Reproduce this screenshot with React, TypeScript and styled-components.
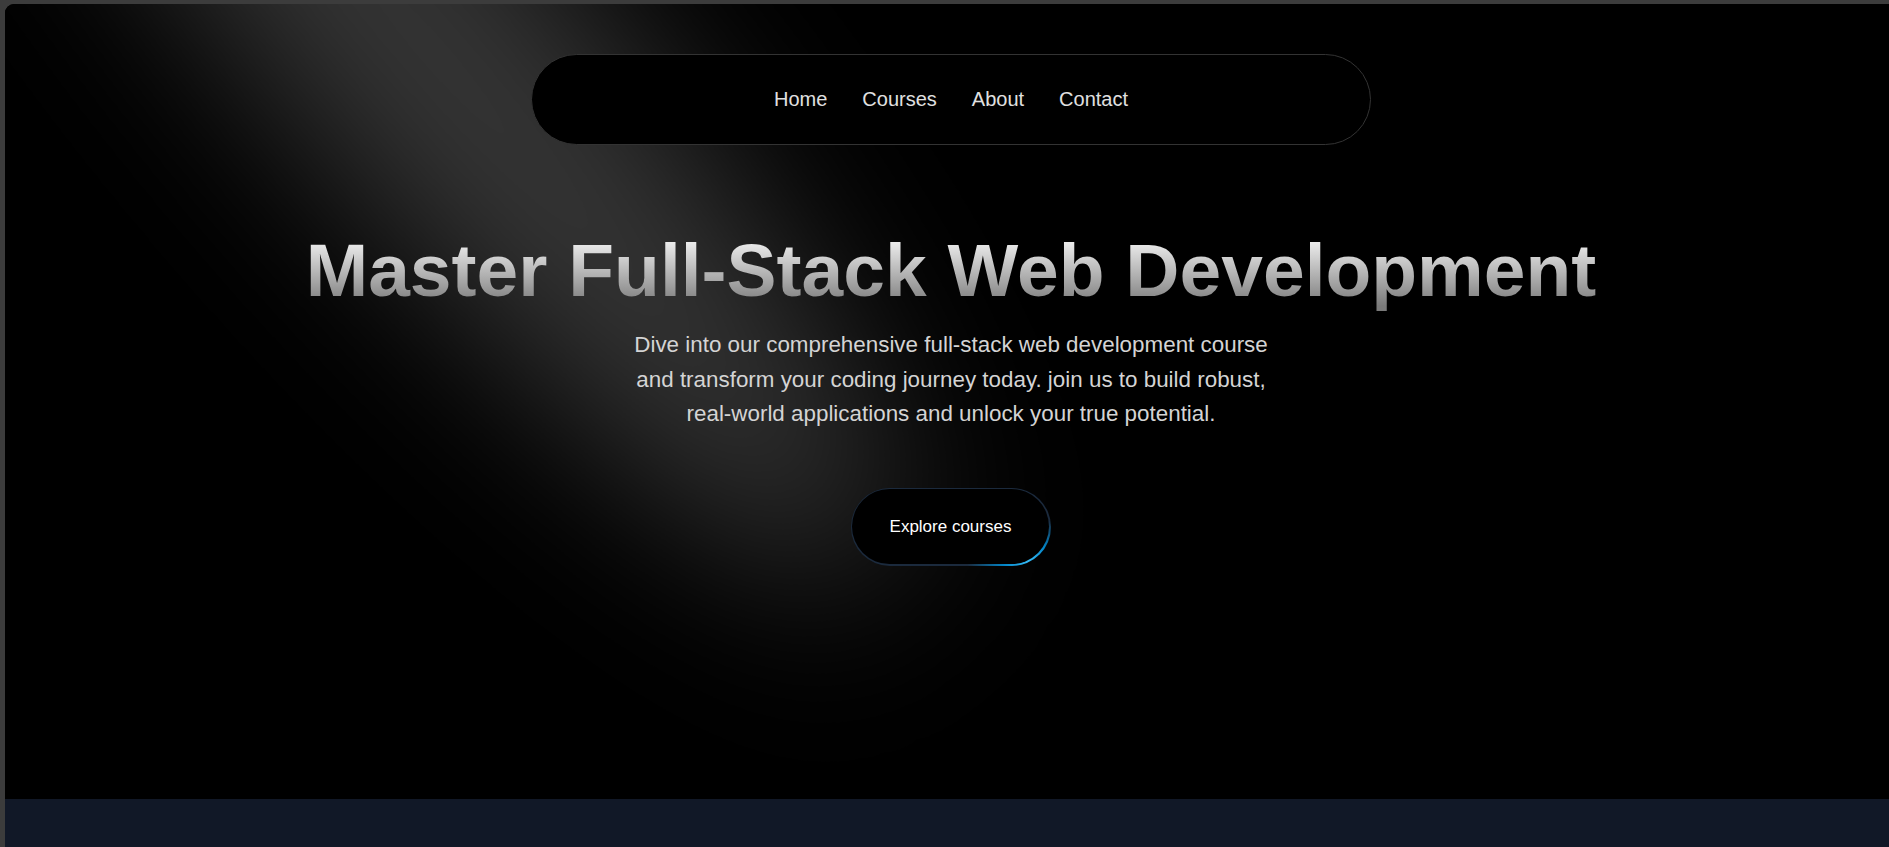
import React from 'react';
import styled, { createGlobalStyle } from 'styled-components';

const GlobalStyle = createGlobalStyle`
  * {
    box-sizing: border-box;
  }
  html,
  body {
    margin: 0;
    padding: 0;
    background: #3c3c3c;
    font-family: 'Liberation Sans', Arial, sans-serif;
    overflow: hidden;
  }
`;

const Frame = styled.div`
  padding: 4px 0 0 5px;
  height: 847px;
`;

const Page = styled.main`
  height: 843px;
  border-top-left-radius: 9px;
  overflow: hidden;
  display: flex;
  flex-direction: column;
  background: #000;
`;

const Hero = styled.section`
  position: relative;
  height: 795px;
  flex-shrink: 0;
  background: #000;
  overflow: hidden;
`;

const Spotlight = styled.svg`
  position: absolute;
  inset: 0;
  width: 100%;
  height: 100%;
  pointer-events: none;
`;

const Content = styled.div`
  position: relative;
  display: flex;
  flex-direction: column;
  align-items: center;
  padding: 50px 0 0 8px;
`;

const Nav = styled.nav`
  width: 840px;
  height: 91px;
  display: flex;
  justify-content: center;
  align-items: center;
  gap: 35px;
  background: #000;
  border: 1px solid #333;
  border-radius: 9999px;
`;

const NavLink = styled.a`
  color: #e0e0e0;
  font-size: 20px;
  text-decoration: none;
  cursor: pointer;
`;

const Title = styled.h1`
  margin: 80px 0 0;
  font-size: 75px;
  line-height: 90px;
  font-weight: 700;
  white-space: nowrap;
  background: linear-gradient(to bottom, #fafafa 10%, #7a7a7a 90%);
  -webkit-background-clip: text;
  background-clip: text;
  color: transparent;
`;

const Lead = styled.p`
  margin: 13px 0 0;
  max-width: 660px;
  font-size: 22.4px;
  line-height: 1.55;
  color: #d4d4d4;
  text-align: center;
`;

const ButtonFrame = styled.span`
  display: inline-flex;
  margin-top: 56px;
  padding: 1px 2px 2px 1px;
  border-radius: 9999px;
  background: radial-gradient(
      ellipse 30% 55% at 88% 92%,
      #38bdf8 0%,
      #0284c7 40%,
      rgba(2, 132, 199, 0) 100%
    ),
    #1b2a3d;
`;

const Button = styled.button`
  height: 75px;
  padding: 0 38px;
  border: none;
  border-radius: 9999px;
  background: #000;
  color: #fff;
  font-family: 'Liberation Sans', Arial, sans-serif;
  font-size: 17px;
  cursor: pointer;
`;

const Lower = styled.section`
  flex: 1;
  background: #111827;
`;

const links = ['Home', 'Courses', 'About', 'Contact'];

export default function App() {
  return (
    <>
      <GlobalStyle />
      <Frame>
        <Page>
          <Hero>
            <Spotlight>
              <defs>
                <filter
                  id="beam"
                  filterUnits="userSpaceOnUse"
                  x="-1500"
                  y="-1500"
                  width="4000"
                  height="4000"
                >
                  <feGaussianBlur stdDeviation="90" />
                </filter>
              </defs>
              <ellipse
                cx="0"
                cy="0"
                rx="690"
                ry="150"
                transform="translate(430 50) rotate(49)"
                fill="white"
                fillOpacity="0.21"
                filter="url(#beam)"
              />
            </Spotlight>
            <Content>
              <Nav>
                {links.map((l) => (
                  <NavLink key={l}>{l}</NavLink>
                ))}
              </Nav>
              <Title>Master Full-Stack Web Development</Title>
              <Lead>
                Dive into our comprehensive full-stack web development course
                and transform your coding journey today. join us to build
                robust, real-world applications and unlock your true potential.
              </Lead>
              <ButtonFrame>
                <Button>Explore courses</Button>
              </ButtonFrame>
            </Content>
          </Hero>
          <Lower />
        </Page>
      </Frame>
    </>
  );
}
